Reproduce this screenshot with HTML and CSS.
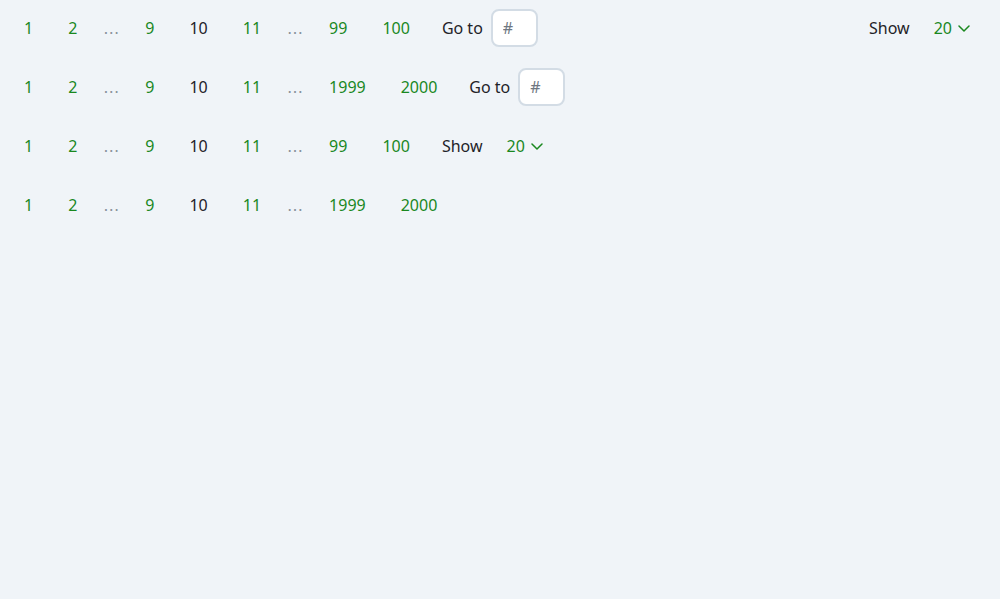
FILE: index.html
```html
<!DOCTYPE html>
<html lang="en">
<head>
<meta charset="utf-8">
<title>Pagination</title>
<link rel="stylesheet" href="styles.css">
</head>
<body>
<div class="stack">
  <nav class="pager pager-full">
    <ul class="pages">
      <li><a class="page" href="#">1</a></li>
      <li><a class="page" href="#">2</a></li>
      <li><span class="ellipsis">…</span></li>
      <li><a class="page" href="#">9</a></li>
      <li><span class="page current">10</span></li>
      <li><a class="page" href="#">11</a></li>
      <li><span class="ellipsis">…</span></li>
      <li><a class="page" href="#">99</a></li>
      <li><a class="page" href="#">100</a></li>
    </ul>
    <label class="goto"><span class="label">Go to</span><input class="goto-input" type="text" placeholder="#"></label>
    <div class="show push"><span class="label">Show</span><button class="select">20<svg class="chev" width="12" height="12" viewBox="0 0 12 12"><path d="M1 4l5 5 5-5" fill="none" stroke="currentColor" stroke-width="1.5" stroke-linecap="round" stroke-linejoin="round"/></svg></button></div>
  </nav>

  <nav class="pager">
    <ul class="pages">
      <li><a class="page" href="#">1</a></li>
      <li><a class="page" href="#">2</a></li>
      <li><span class="ellipsis">…</span></li>
      <li><a class="page" href="#">9</a></li>
      <li><span class="page current">10</span></li>
      <li><a class="page" href="#">11</a></li>
      <li><span class="ellipsis">…</span></li>
      <li><a class="page" href="#">1999</a></li>
      <li><a class="page" href="#">2000</a></li>
    </ul>
    <label class="goto"><span class="label">Go to</span><input class="goto-input" type="text" placeholder="#"></label>
  </nav>

  <nav class="pager">
    <ul class="pages">
      <li><a class="page" href="#">1</a></li>
      <li><a class="page" href="#">2</a></li>
      <li><span class="ellipsis">…</span></li>
      <li><a class="page" href="#">9</a></li>
      <li><span class="page current">10</span></li>
      <li><a class="page" href="#">11</a></li>
      <li><span class="ellipsis">…</span></li>
      <li><a class="page" href="#">99</a></li>
      <li><a class="page" href="#">100</a></li>
    </ul>
    <div class="show"><span class="label">Show</span><button class="select">20<svg class="chev" width="12" height="12" viewBox="0 0 12 12"><path d="M1 4l5 5 5-5" fill="none" stroke="currentColor" stroke-width="1.5" stroke-linecap="round" stroke-linejoin="round"/></svg></button></div>
  </nav>

  <nav class="pager">
    <ul class="pages">
      <li><a class="page" href="#">1</a></li>
      <li><a class="page" href="#">2</a></li>
      <li><span class="ellipsis">…</span></li>
      <li><a class="page" href="#">9</a></li>
      <li><span class="page current">10</span></li>
      <li><a class="page" href="#">11</a></li>
      <li><span class="ellipsis">…</span></li>
      <li><a class="page" href="#">1999</a></li>
      <li><a class="page" href="#">2000</a></li>
    </ul>
  </nav>
</div>
</body>
</html>
```
FILE: styles.css
```css
html, body {
  background: #f0f4f8;
}
body {
  margin: 8px;
  font-family: "Noto Sans", "Open Sans", sans-serif;
  font-size: 16px;
  color: #1f2328;
}
.stack {
  display: flex;
  flex-direction: column;
  gap: 19px;
}
.pager {
  display: flex;
  align-items: center;
  height: 40px;
  gap: 16px;
}
.pages {
  list-style: none;
  margin: 0;
  padding: 0;
  display: flex;
  align-items: center;
  gap: 3px;
}
.page {
  display: flex;
  align-items: center;
  height: 40px;
  padding: 0 16px;
  color: #1a881f;
  text-decoration: none;
}
.page.current {
  color: #1f2328;
}
.ellipsis {
  display: flex;
  align-items: center;
  height: 40px;
  padding: 0 7px;
  font-family: "DejaVu Sans", sans-serif;
  font-size: 16px;
  color: #8a939c;
}
.goto, .show {
  display: flex;
  align-items: center;
  gap: 8px;
}
.label {
  color: #1f2328;
}
.goto-input {
  box-sizing: border-box;
  width: 47px;
  height: 38px;
  border: 2px solid #d3dce5;
  border-radius: 8px;
  background: #fff;
  padding: 0 10px;
  font: inherit;
  color: #1f2328;
  outline: none;
}
.goto-input::placeholder {
  color: #6e7781;
}
.push {
  margin-left: auto;
}
.select {
  display: flex;
  align-items: center;
  gap: 6px;
  height: 40px;
  padding: 0 22px 0 16px;
  border: 0;
  background: transparent;
  font: inherit;
  color: #1a881f;
  cursor: pointer;
}
.chev {
  display: block;
}
```
